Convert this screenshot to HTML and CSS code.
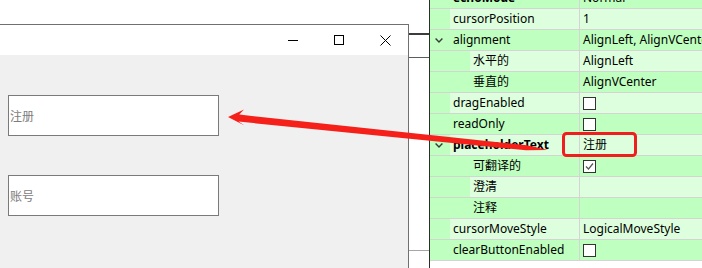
FILE: index.html
```html
<!DOCTYPE html>
<html>
<head>
    <title>placeholderText</title>
    <meta name="viewport" content="width=device-width, initial-scale=1.0">
    <link rel="stylesheet" href="styles.css">
</head>
<body>
    <div class="screen">
        <div class="canvas">
            <div class="window">
                <div class="titlebar">
                    <span class="tbtn">
                        <svg width="10" height="10" viewBox="0 0 10 10"><path d="M0 5.5H10" stroke="#000" stroke-width="1"/></svg>
                    </span>
                    <span class="tbtn">
                        <svg width="10" height="10" viewBox="0 0 10 10"><rect x="0.5" y="0.5" width="9" height="9" fill="none" stroke="#000" stroke-width="1"/></svg>
                    </span>
                    <span class="tbtn">
                        <svg width="11" height="11" viewBox="0 0 11 11"><path d="M0.5 0.5L10.5 10.5M10.5 0.5L0.5 10.5" stroke="#000" stroke-width="1"/></svg>
                    </span>
                </div>
                <div class="client">
                    <input class="edit" type="text" placeholder="注册">
                    <input class="edit" type="text" placeholder="账号">
                </div>
            </div>
        </div>

        <div class="strip">
            <div class="strip-tab"></div>
            <div class="strip-body"></div>
        </div>

        <div class="props">
            <div class="rows">
                <div class="row">
                    <div class="name"><span class="indent"></span><span class="label bold">echoMode</span></div>
                    <div class="value">Normal</div>
                </div>
                <div class="row alt">
                    <div class="name"><span class="indent"></span><span class="label">cursorPosition</span></div>
                    <div class="value">1</div>
                </div>
                <div class="row">
                    <div class="name">
                        <span class="indent"><svg class="chev" width="8" height="5" viewBox="0 0 8 5"><path d="M0.6 0.6L4 4L7.4 0.6" fill="none" stroke="#3a3a3a" stroke-width="1.4"/></svg></span>
                        <span class="label">alignment</span>
                    </div>
                    <div class="value">AlignLeft, AlignVCenter</div>
                </div>
                <div class="row alt lvl2">
                    <div class="name"><span class="indent"></span><span class="label">水平的</span></div>
                    <div class="value">AlignLeft</div>
                </div>
                <div class="row lvl2">
                    <div class="name"><span class="indent"></span><span class="label">垂直的</span></div>
                    <div class="value">AlignVCenter</div>
                </div>
                <div class="row alt">
                    <div class="name"><span class="indent"></span><span class="label">dragEnabled</span></div>
                    <div class="value"><span class="check"></span></div>
                </div>
                <div class="row">
                    <div class="name"><span class="indent"></span><span class="label">readOnly</span></div>
                    <div class="value"><span class="check"></span></div>
                </div>
                <div class="row alt">
                    <div class="name">
                        <span class="indent"><svg class="chev" width="8" height="5" viewBox="0 0 8 5"><path d="M0.6 0.6L4 4L7.4 0.6" fill="none" stroke="#3a3a3a" stroke-width="1.4"/></svg></span>
                        <span class="label bold">placeholderText</span>
                    </div>
                    <div class="value">注册</div>
                </div>
                <div class="row lvl2">
                    <div class="name"><span class="indent"></span><span class="label">可翻译的</span></div>
                    <div class="value">
                        <span class="check">
                            <svg width="11" height="11" viewBox="0 0 11 11"><path d="M2 5.5L4.5 8L9 2.5" fill="none" stroke="#555" stroke-width="1.2"/></svg>
                        </span>
                    </div>
                </div>
                <div class="row alt lvl2">
                    <div class="name"><span class="indent"></span><span class="label">澄清</span></div>
                    <div class="value"></div>
                </div>
                <div class="row lvl2">
                    <div class="name"><span class="indent"></span><span class="label">注释</span></div>
                    <div class="value"></div>
                </div>
                <div class="row alt">
                    <div class="name"><span class="indent"></span><span class="label">cursorMoveStyle</span></div>
                    <div class="value">LogicalMoveStyle</div>
                </div>
                <div class="row">
                    <div class="name"><span class="indent"></span><span class="label">clearButtonEnabled</span></div>
                    <div class="value"><span class="check"></span></div>
                </div>
            </div>
        </div>

        <!-- 标注：红框和箭头 -->
        <svg class="markup" width="702" height="268" viewBox="0 0 702 268">
            <rect x="563.5" y="133.5" width="72" height="22" rx="3" fill="none" stroke="#f01e1e" stroke-width="3"/>
            <polygon points="228,117 244,109.5 239.3,114.6 526.7,145.3 548,150 526.1,150.3 238.5,121.6 244.5,125.5" fill="#f5201a"/>
        </svg>
    </div>
</body>
</html>
```

FILE: styles.css
```css
:root {
    --row-bg: #bfffbf;
    --row-alt: #ddffdd;
    --grid: #d4d4d4;
    --frame: #707070;
}

body {
    margin: 0;
    background: #fff;
    font-family: "Noto Sans", "Noto Sans CJK SC", sans-serif;
    font-size: 12px;
    color: #000;
}

.screen {
    position: relative;
    display: flex;
    width: 702px;
    height: 268px;
    overflow: hidden;
}

/* 左侧预览窗口 */
.canvas {
    width: 409px;
    padding-top: 24px;
    display: flex;
    flex-direction: column;
    box-sizing: border-box;
    background: #fff;
}

.window {
    flex: 1;
    display: flex;
    flex-direction: column;
    border-top: 1px solid var(--frame);
    border-right: 1px solid var(--frame);
}

.titlebar {
    height: 30px;
    display: flex;
    justify-content: flex-end;
    background: #fff;
}

.tbtn {
    width: 46px;
    display: flex;
    align-items: center;
    justify-content: center;
}

.client {
    flex: 1;
    display: flex;
    flex-direction: column;
    gap: 39px;
    padding: 40px 0 0 8px;
    background: #f0f0f0;
}

.edit {
    width: 211px;
    height: 41px;
    box-sizing: border-box;
    margin: 0;
    padding: 0 1px;
    border: 1px solid #7a7a7a;
    border-radius: 0;
    background: #fff;
    font-family: "Noto Sans CJK SC", sans-serif;
    font-size: 12px;
    outline: none;
}

.edit::placeholder {
    color: #7c7c7c;
}

/* 中间的窄条 */
.strip {
    width: 20px;
    display: flex;
    flex-direction: column;
    padding-top: 33px;
    background: #fff;
}

.strip-tab {
    height: 22px;
    border-top: 2px solid #3c3c3c;
    border-bottom: 1px solid #5c5c5c;
}

.strip-body {
    height: 192px;
    border-bottom: 1px solid #a6a6a6;
}

/* 属性编辑器 */
.props {
    flex: 1;
    border-left: 1px solid #2d2d2d;
    background: #fff;
    overflow: hidden;
}

.rows {
    margin-top: -12px;
}

.row {
    display: flex;
    height: 21px;
    box-sizing: border-box;
    border-bottom: 1px solid var(--grid);
    background: var(--row-bg);
    line-height: 20px;
    white-space: nowrap;
}

.name {
    width: 149px;
    display: flex;
}

.indent {
    width: 20px;
    display: flex;
    align-items: center;
    padding-left: 5px;
    box-sizing: border-box;
}

.lvl2 .indent {
    width: 40px;
}

.label {
    flex: 1;
    padding-left: 3px;
}

.bold {
    font-weight: bold;
}

.value {
    flex: 1;
    display: flex;
    align-items: center;
    padding-left: 3px;
    border-left: 1px solid var(--grid);
    overflow: hidden;
}

.alt .label,
.alt .value {
    background: var(--row-alt);
}

.check {
    width: 13px;
    height: 13px;
    box-sizing: border-box;
    border: 1px solid #333;
    background: #fff;
    display: flex;
}

.markup {
    position: absolute;
    left: 0;
    top: 0;
    pointer-events: none;
}
```
